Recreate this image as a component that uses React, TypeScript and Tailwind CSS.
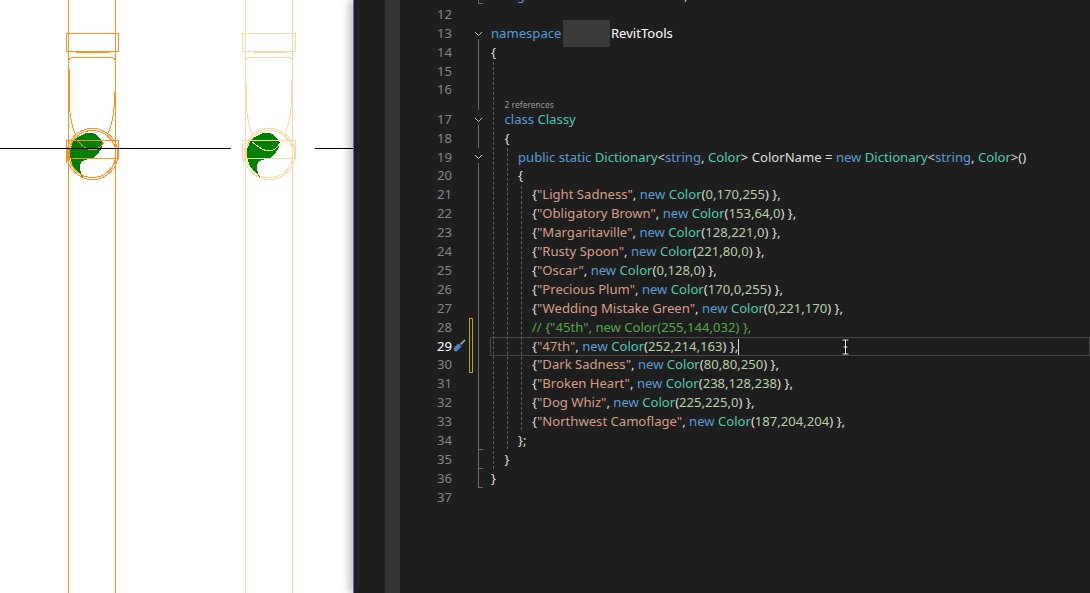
import type { ReactNode } from "react";

const orange = "#ff9020";
const pale = "#fcd6a3";

const K = ({ children }: { children: ReactNode }) => <span className="text-[#569cd6]">{children}</span>;
const T = ({ children }: { children: ReactNode }) => <span className="text-[#4ec9b0]">{children}</span>;
const S = ({ children }: { children: ReactNode }) => <span className="text-[#d69d85]">{children}</span>;
const N = ({ children }: { children: ReactNode }) => <span className="text-[#b5cea8]">{children}</span>;

function Entry({ name, rgb, caret }: { name: string; rgb: string; caret?: boolean }) {
  return (
    <span>
      {"{"}
      <S>"{name}"</S>, <K>new</K> <T>Color</T>(<N>{rgb}</N>) {"},"}
      {caret && <span className="inline-block w-px h-[16px] bg-[#dcdcdc] align-middle" />}
    </span>
  );
}

function Chevron() {
  return (
    <svg width="9" height="6" viewBox="0 0 9 6" className="ml-[22px]">
      <path d="M1 1l3.5 3.5L8 1" fill="none" stroke="#c0c0c0" strokeWidth="1" />
    </svg>
  );
}

function Row({
  num,
  indent = "pl-0",
  fold,
  active,
  children,
}: {
  num: number;
  indent?: string;
  fold?: boolean;
  active?: boolean;
  children?: ReactNode;
}) {
  return (
    <div className="flex h-[18.92px] items-center">
      <div className={active ? "w-[52px] text-right text-white" : "w-[52px] text-right text-[#858585]"}>{num}</div>
      <div className="w-[39px] flex items-center">{fold && <Chevron />}</div>
      <div className={active ? `flex-1 self-stretch flex items-center whitespace-pre border border-[#464646] -ml-px ${indent}` : `flex-1 whitespace-pre ${indent}`}>
        {children}
      </div>
    </div>
  );
}

function Pipe({
  dx,
  color,
  inner,
  boxX,
  boxW,
  thick,
}: {
  dx: number;
  color: string;
  inner: string;
  boxX: number;
  boxW: number;
  thick: string;
}) {
  return (
    <g transform={`translate(${dx} 0)`} shapeRendering="crispEdges">
      <path
        d="M75 139.3 C73 141 72 143 71.7 145 L69.3 151.7 C69.4 155 70 158 70.7 160 L73.3 166.7 C75 169 77 172 78.3 173.3 L83.3 177.7 L81.7 175 C80.5 172 80 170 80 168.3 C80 166 80.2 164.5 80.7 163.3 C81.8 161.5 83 160.6 85 160 C88 159 91 158.5 93.3 157.7 C95.5 156.5 97 155 98.3 153.3 C100 151 101 149 101.7 147.3 L103.3 143.3 C102 141 101 139.5 100 138.3 C98 136 96.5 135 95 134 C93 133.2 91.5 132.7 90 132.7 C87 132.8 84 133.8 81.7 135 C79 136.2 77 137.6 75 139.3 Z"
        fill="#008000"
      />
      <g fill="none" stroke={color}>
        <path d="M68.5 0V593M115.5 0V593" />
        <rect x={boxX} y="33.5" width={boxW} height="18" />
        <path d="M76 52.5H109" strokeWidth="1.5" />
        <path d="M68.5 60Q70 57.5 75 57.5H109Q114 57.5 115.5 60" />
        <path d="M69.5 106C70 118 72 127 76 136" />
        <path d="M114 108C113.5 118 111 127 107 136" />
        <path d={thick} strokeWidth="1.5" />
        <circle cx="92.5" cy="154" r="23.5" />
        <circle cx="92.5" cy="154" r="25.5" />
        <rect x={boxX} y="140.5" width={boxW} height="17.5" />
        <path d="M66.5 158V162.5M118.5 147V158" />
        <path d={inner} />
      </g>
    </g>
  );
}

export default function App() {
  return (
    <div className="flex h-[593px] w-full overflow-hidden bg-white font-['Noto_Sans',sans-serif] text-[13.1px]">
      <div className="w-[353px] shrink-0 bg-white">
        <svg width="353" height="593" viewBox="0 0 353 593">
          <Pipe dx={0} color={orange} boxX={66.5} boxW={52} thick="M69 70V106M114.5 92V108" inner="M78 141C82 146 86 150 92 150C97 150 101 147 104 142" />
          <Pipe dx={177} color={pale} boxX={65.5} boxW={53} thick="M69 83V108M114.5 80V107" inner="M75 142C81 146 85 151 92 151C97 151 100 148 103 143" />
          <path d="M0 148.5H231M315 148.5H353" stroke="#000" shapeRendering="crispEdges" />
        </svg>
      </div>

      <div className="relative flex flex-1 border-l border-[#6a5fd0] bg-[#1e1e1e] text-[#dcdcdc] shadow-[-4px_0_8px_rgba(0,0,0,0.25)]">
        <div className="w-[31px] shrink-0" />
        <div className="w-[15px] shrink-0 bg-[#333333]" />

        <div className="relative flex-1 overflow-hidden">
          <div className="-mt-[13.7px]">
            <Row num={11}>
              <K>using</K> Autodesk.Revit.Attributes;
            </Row>
            <Row num={12} />
            <Row num={13} fold>
              <K>namespace</K>
              <span className="relative inline-block w-[47px] h-[14px] ml-[1.5px] align-middle">
                <span className="absolute left-0 top-[-7px] h-[27px] w-[47px] bg-[#3a3a3a]" />
              </span>
              <span className="text-white ml-px">RevitTools</span>
            </Row>
            <Row num={14}>{"{"}</Row>
            <Row num={15} />
            <Row num={16} />
            <div className="h-[10.3px] pl-[104.5px] flex items-center text-[8.5px] text-[#999999]">2 references</div>
            <Row num={17} indent="pl-[13.5px]" fold>
              <K>class</K> <T>Classy</T>
            </Row>
            <Row num={18} indent="pl-[13.5px]">{"{"}</Row>
            <Row num={19} indent="pl-[27px]" fold>
              <K>public</K> <K>static</K> <T>Dictionary</T>{"<"}<K>string</K>, <T>Color</T>{"> "}ColorName = <K>new</K> <T>Dictionary</T>{"<"}<K>string</K>, <T>Color</T>{">()"}
            </Row>
            <Row num={20} indent="pl-[27px]">{"{"}</Row>
            <Row num={21} indent="pl-[41px]"><Entry name="Light Sadness" rgb="0,170,255" /></Row>
            <Row num={22} indent="pl-[41px]"><Entry name="Obligatory Brown" rgb="153,64,0" /></Row>
            <Row num={23} indent="pl-[41px]"><Entry name="Margaritaville" rgb="128,221,0" /></Row>
            <Row num={24} indent="pl-[41px]"><Entry name="Rusty Spoon" rgb="221,80,0" /></Row>
            <Row num={25} indent="pl-[41px]"><Entry name="Oscar" rgb="0,128,0" /></Row>
            <Row num={26} indent="pl-[41px]"><Entry name="Precious Plum" rgb="170,0,255" /></Row>
            <Row num={27} indent="pl-[41px]"><Entry name="Wedding Mistake Green" rgb="0,221,170" /></Row>
            <Row num={28} indent="pl-[41px]">
              <span className="text-[#57a64a]">{'// {"45th", new Color(255,144,032) },'}</span>
            </Row>
            <Row num={29} indent="pl-[41px]" active><Entry name="47th" rgb="252,214,163" caret /></Row>
            <Row num={30} indent="pl-[41px]"><Entry name="Dark Sadness" rgb="80,80,250" /></Row>
            <Row num={31} indent="pl-[41px]"><Entry name="Broken Heart" rgb="238,128,238" /></Row>
            <Row num={32} indent="pl-[41px]"><Entry name="Dog Whiz" rgb="225,225,0" /></Row>
            <Row num={33} indent="pl-[41px]"><Entry name="Northwest Camoflage" rgb="187,204,204" /></Row>
            <Row num={34} indent="pl-[27px]">{"};"}</Row>
            <Row num={35} indent="pl-[13.5px]">{"}"}</Row>
            <Row num={36}>{"}"}</Row>
            <Row num={37} />
          </div>

          {/* fold lines */}
          <div className="absolute left-[78px] top-0 h-[4px] w-[5px] border-l border-b border-[#6a6a6a]" />
          <div className="absolute left-[78px] top-[39px] h-[71px] border-l border-[#6a6a6a]" />
          <div className="absolute left-[78px] top-[125px] h-[23px] border-l border-[#6a6a6a]" />
          <div className="absolute left-[78px] top-[163px] h-[324px] border-l border-[#6a6a6a]" />
          <div className="absolute left-[78px] top-[449px] w-[5px] border-t border-[#6a6a6a]" />
          <div className="absolute left-[78px] top-[468px] w-[5px] border-t border-[#6a6a6a]" />
          <div className="absolute left-[78px] top-[487px] w-[5px] border-t border-[#6a6a6a]" />

          {/* indent guides */}
          <div className="absolute left-[93px] top-[62px] h-[407px] border-l border-dashed border-[#5f5f5f]" />
          <div className="absolute left-[107px] top-[148px] h-[301px] border-l border-dashed border-[#5f5f5f]" />
          <div className="absolute left-[121px] top-[186px] h-[244px] border-l border-dashed border-[#5f5f5f]" />

          {/* changed lines marker and screwdriver */}
          <div className="absolute left-[69px] top-[318px] h-[55px] w-[4px] border border-[#b8a02c]" />
          <svg width="15" height="15" viewBox="0 0 15 15" className="absolute left-[52px] top-[338px]">
            <path d="M2 9.5L6.5 5.5L9.5 8.5L5 13C3.5 14.5 0.5 12.5 2 9.5Z" fill="#4f82b8" />
            <path d="M8.5 6.5L13 2" stroke="#a9b7c6" strokeWidth="1.6" />
          </svg>
        </div>

        {/* mouse cursor */}
        <svg width="9" height="16" viewBox="0 0 9 16" className="absolute left-[487px] top-[339px]">
          <path d="M1.5 1H7.5M4.5 1V15M1.5 15H7.5M2.5 8H6.5" fill="none" stroke="#000" strokeWidth="2.5" />
          <path d="M1.5 1H7.5M4.5 1V15M1.5 15H7.5M2.5 8H6.5" fill="none" stroke="#fff" strokeWidth="1" />
        </svg>
      </div>
    </div>
  );
}
